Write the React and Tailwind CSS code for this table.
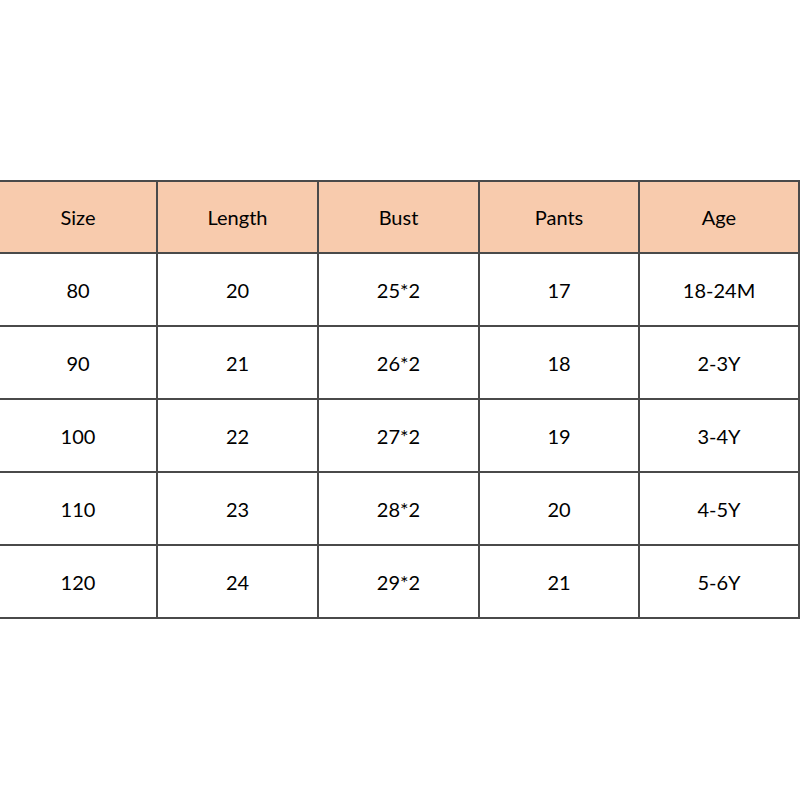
import React from 'react'

const headers = ['Size', 'Length', 'Bust', 'Pants', 'Age']

const rows = [
  ['80', '20', '25*2', '17', '18-24M'],
  ['90', '21', '26*2', '18', '2-3Y'],
  ['100', '22', '27*2', '19', '3-4Y'],
  ['110', '23', '28*2', '20', '4-5Y'],
  ['120', '24', '29*2', '21', '5-6Y'],
]

const App = () => {
  return (
    <div className="min-h-[800px] w-[800px] bg-white pt-[180px] text-black" style={{ fontFamily: 'Lato, "Open Sans", sans-serif' }}>
      <div className="grid grid-cols-[158px_161px_161px_160px_160px] border-t-2 border-[#4a4a4a]">
        {headers.map((h) => (
          <div key={h} className="flex h-[72px] items-center justify-center border-r-2 border-b-2 border-[#4a4a4a] bg-[#f8cbad] text-[20px]">
            {h}
          </div>
        ))}
        {rows.map((row, i) =>
          row.map((cell, j) => (
            <div key={`${i}-${j}`} className="flex h-[73px] items-center justify-center border-r-2 border-b-2 border-[#4a4a4a] text-[20px]">
              {cell}
            </div>
          ))
        )}
      </div>
    </div>
  )
}

export default App
